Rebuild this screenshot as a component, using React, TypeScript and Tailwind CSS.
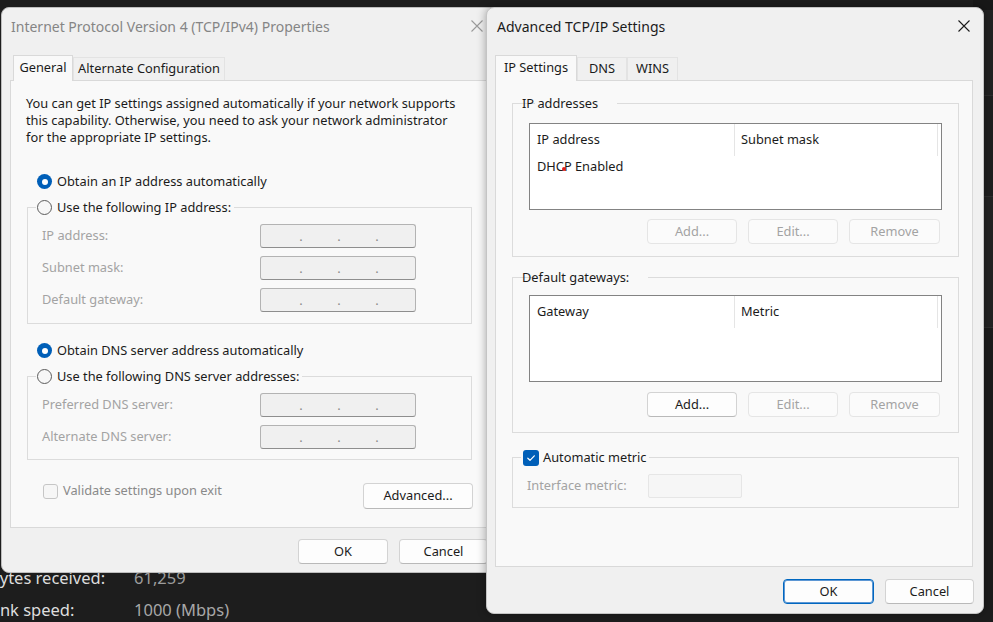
import clsx from "clsx";

function CloseIcon({ className }: { className?: string }) {
  return (
    <svg width="12" height="12" viewBox="0 0 12 12" className={className}>
      <path d="M0.5 0.5L11.5 11.5M11.5 0.5L0.5 11.5" stroke="currentColor" strokeWidth="1.1" fill="none" />
    </svg>
  );
}

function Radio({ checked, label }: { checked?: boolean; label: string }) {
  return (
    <span className="flex items-center h-[17px]">
      {checked ? (
        <span className="w-[15px] h-[15px] rounded-full bg-[#005fb8] flex items-center justify-center">
          <span className="w-[6px] h-[6px] rounded-full bg-white" />
        </span>
      ) : (
        <span className="w-[15px] h-[15px] rounded-full border border-[#5c5c5c] bg-[#f7f7f7]" />
      )}
      <span className="ml-[5px]">{label}</span>
    </span>
  );
}

function IpBox() {
  return (
    <div className="w-[156px] h-[24px] rounded-[3px] border border-[#b3b3b3] border-b-[#8e8e8e] bg-[#f0f0f0] flex pl-[21px] text-[#8a8a8a]">
      {[0, 1, 2].map((i) => (
        <span key={i} className="w-[38px] text-center leading-[22px]">.</span>
      ))}
    </div>
  );
}

function Button({ label, disabled, primary, className }: { label: string; disabled?: boolean; primary?: boolean; className?: string }) {
  return (
    <div
      className={clsx(
        "h-[25px] rounded-[4px] border flex items-center justify-center",
        disabled && "bg-[#fbfbfb] border-[#e5e5e5] text-[#a3a3a3]",
        !disabled && primary && "bg-[#fdfdfd] border-[#0067c0] shadow-[inset_0_0_0_1px_#5d97d4] text-[#1b1b1b]",
        !disabled && !primary && "bg-[#fdfdfd] border-[#d3d3d3] border-b-[#b9b9b9] text-[#1b1b1b]",
        className
      )}
    >
      {label}
    </div>
  );
}

function Tab({ label, active, width }: { label: string; active?: boolean; width: string }) {
  return (
    <div
      className={clsx(
        "flex items-center justify-center border border-b-0",
        width,
        active
          ? "h-[26px] -mb-px bg-[#f9f9f9] border-[#d9d9d9] relative z-10 pb-[2px]"
          : "h-[23px] bg-[#f0f0f0] border-[#e3e3e3]"
      )}
    >
      {label}
    </div>
  );
}

function ListView({ cols, rows, marker }: { cols: [string, string]; rows: string[]; marker?: boolean }) {
  return (
    <div className="w-[413px] h-[87px] border border-[#838383] bg-white">
      <div className="flex h-[32px]">
        <div className="w-[205px] border-r border-[#e5e5e5] pl-[7px] flex items-center">{cols[0]}</div>
        <div className="w-[203px] border-r border-[#e5e5e5] pl-[6px] flex items-center">{cols[1]}</div>
      </div>
      {rows.map((r) => (
        <div key={r} className="relative h-[21px] pl-[7px] flex items-center">
          {r}
          {marker && <span className="absolute left-[32px] top-[11px] w-[4px] h-[4px] rounded-full bg-[#e0201a]" />}
        </div>
      ))}
    </div>
  );
}

function BackgroundStatus() {
  return (
    <div className="absolute left-0 top-[562px] text-[16.5px] font-['Noto_Sans',sans-serif]">
      <div className="flex h-[32px] items-center">
        <span className="-ml-[11px] w-[145px] shrink-0 text-[#dedede]">Bytes received:</span>
        <span className="text-[#9c9c9c]">61,259</span>
      </div>
      <div className="flex h-[32px] items-center">
        <span className="-ml-[13px] w-[147px] shrink-0 text-[#dedede]">Link speed:</span>
        <span className="text-[#a8a8a8]">1000 (Mbps)</span>
      </div>
    </div>
  );
}

function Ipv4Properties() {
  return (
    <div className="absolute left-[1px] top-[7px] w-[497px] h-[566px] rounded-[8px] bg-[#f0f0f0] border border-[#bdbdbd] flex flex-col overflow-hidden">
      <div className="h-[36px] shrink-0 flex items-center justify-between pl-[9px] pr-[14px]">
        <span className="text-[14px] text-[#858585]">Internet Protocol Version 4 (TCP/IPv4) Properties</span>
        <CloseIcon className="text-[#9a9a9a]" />
      </div>

      <div className="mt-[11px] ml-[11px] flex items-end">
        <Tab label="General" active width="w-[60px]" />
        <Tab label="Alternate Configuration" width="w-[152px]" />
      </div>

      <div className="ml-[8px] w-[478px] h-[448px] border border-[#d9d9d9] bg-[#f9f9f9] flex flex-col">
        <div className="pl-[15px] pt-[14px] leading-[17px]">
          <p>You can get IP settings assigned automatically if your network supports</p>
          <p>this capability. Otherwise, you need to ask your network administrator</p>
          <p>for the appropriate IP settings.</p>
        </div>

        <div className="mt-[27px] ml-[26px]">
          <Radio checked label="Obtain an IP address automatically" />
        </div>

        <fieldset className="mt-[9px] ml-[16px] w-[445px] border border-[#dcdcdc] pb-[11px]">
          <legend className="ml-[8px] pl-[1px] pr-[3px]">
            <Radio label="Use the following IP address:" />
          </legend>
          <div className="mt-[8px] flex flex-col gap-[8px] text-[#a3a3a3]">
            {["IP address:", "Subnet mask:", "Default gateway:"].map((l) => (
              <div key={l} className="flex items-center">
                <span className="pl-[14px] w-[232px]">{l}</span>
                <IpBox />
              </div>
            ))}
          </div>
        </fieldset>

        <div className="mt-[18px] ml-[26px]">
          <Radio checked label="Obtain DNS server address automatically" />
        </div>

        <fieldset className="mt-[9px] ml-[16px] w-[445px] border border-[#dcdcdc] pb-[10px]">
          <legend className="ml-[8px] pl-[1px] pr-[3px]">
            <Radio label="Use the following DNS server addresses:" />
          </legend>
          <div className="mt-[8px] flex flex-col gap-[8px] text-[#a3a3a3]">
            {["Preferred DNS server:", "Alternate DNS server:"].map((l) => (
              <div key={l} className="flex items-center">
                <span className="pl-[14px] w-[232px]">{l}</span>
                <IpBox />
              </div>
            ))}
          </div>
        </fieldset>

        <div className="mt-[23px] flex items-start justify-between pl-[32px] pr-[14px]">
          <div className="flex items-center h-[16px] text-[#8a8a8a]">
            <span className="w-[15px] h-[15px] rounded-[3px] border border-[#c6c6c6] bg-[#f6f6f6]" />
            <span className="ml-[5px]">Validate settings upon exit</span>
          </div>
          <Button label="Advanced..." className="w-[110px] h-[26px]" />
        </div>
      </div>

      <div className="mt-[11px] mr-[9px] flex justify-end gap-[11px]">
        <Button label="OK" className="w-[90px]" />
        <Button label="Cancel" className="w-[89px]" />
      </div>
    </div>
  );
}

function AdvancedSettings() {
  return (
    <div className="absolute left-[486px] top-[7px] w-[498px] h-[607px] rounded-[8px] bg-[#f0f0f0] border border-[#c4c4c4] shadow-[0_0_10px_rgba(0,0,0,0.35)] flex flex-col overflow-hidden">
      <div className="h-[36px] shrink-0 flex items-center justify-between pl-[10px] pr-[13px]">
        <span className="text-[14px] text-[#1b1b1b]">Advanced TCP/IP Settings</span>
        <CloseIcon className="text-[#1b1b1b]" />
      </div>

      <div className="mt-[11px] ml-[8px] flex items-end">
        <Tab label="IP Settings" active width="w-[82px]" />
        <Tab label="DNS" width="w-[50px]" />
        <Tab label="WINS" width="w-[51px]" />
      </div>

      <div className="ml-[8px] w-[478px] h-[487px] border border-[#d9d9d9] bg-[#f9f9f9] flex flex-col">
        <fieldset className="mt-[14px] ml-[16px] w-[447px] border border-[#dcdcdc] pl-[16px] pb-[12px]">
          <legend className="ml-[6px] -translate-x-[16px] px-[3px] leading-[17px]">IP addresses</legend>
          <div className="mt-[11px]">
            <ListView cols={["IP address", "Subnet mask"]} rows={["DHCP Enabled"]} marker />
          </div>
          <div className="mt-[9px] w-[413px] pr-[2px] flex justify-end gap-[11px]">
            <Button label="Add..." disabled className="w-[90px]" />
            <Button label="Edit..." disabled className="w-[90px]" />
            <Button label="Remove" disabled className="w-[91px]" />
          </div>
        </fieldset>

        <fieldset className="mt-[12px] ml-[16px] w-[447px] border border-[#dcdcdc] pl-[16px] pb-[15px]">
          <legend className="ml-[6px] -translate-x-[16px] px-[3px] leading-[17px]">Default gateways:</legend>
          <div className="mt-[9px]">
            <ListView cols={["Gateway", "Metric"]} rows={[]} />
          </div>
          <div className="mt-[10px] w-[413px] pr-[2px] flex justify-end gap-[11px]">
            <Button label="Add..." className="w-[90px]" />
            <Button label="Edit..." disabled className="w-[90px]" />
            <Button label="Remove" disabled className="w-[91px]" />
          </div>
        </fieldset>

        <fieldset className="mt-[16px] ml-[16px] w-[447px] border border-[#dcdcdc] pb-[9px]">
          <legend className="ml-[8px] px-[2px]">
            <span className="flex items-center h-[17px]">
              <span className="w-[16px] h-[16px] rounded-[3px] bg-[#005fb8] flex items-center justify-center">
                <svg width="10" height="10" viewBox="0 0 10 10">
                  <path d="M1.8 5.2L4 7.3L8.3 2.8" stroke="white" strokeWidth="1.2" fill="none" strokeLinecap="round" strokeLinejoin="round" />
                </svg>
              </span>
              <span className="ml-[4px]">Automatic metric</span>
            </span>
          </legend>
          <div className="mt-[8px] flex items-center">
            <span className="pl-[14px] w-[135px] text-[#a3a3a3]">Interface metric:</span>
            <div className="w-[94px] h-[24px] rounded-[2px] border border-[#e6e6e6] bg-[#f6f6f6]" />
          </div>
        </fieldset>
      </div>

      <div className="mt-[12px] mr-[9px] flex justify-end gap-[11px]">
        <Button label="OK" primary className="w-[91px]" />
        <Button label="Cancel" className="w-[89px]" />
      </div>
    </div>
  );
}

export default function App() {
  return (
    <div className="relative w-[993px] h-[622px] overflow-hidden bg-[#1d1d1d] text-[12.8px] text-[#1b1b1b] font-['Noto_Sans',sans-serif]">
      <div className="absolute right-0 top-0 w-[20px] h-full flex flex-col">
        <div className="h-[10px] bg-[#181818]" />
        <div className="h-[85px] bg-[#222222]" />
        <div className="h-[1px] bg-[#2e2e2e]" />
        <div className="h-[100px] bg-[#1f1f1f]" />
        <div className="h-[1px] bg-[#2e2e2e]" />
        <div className="h-[130px] bg-[#232323]" />
        <div className="h-[1px] bg-[#2e2e2e]" />
        <div className="flex-1 bg-[#1c1c1c]" />
      </div>
      <BackgroundStatus />
      <Ipv4Properties />
      <AdvancedSettings />
    </div>
  );
}
